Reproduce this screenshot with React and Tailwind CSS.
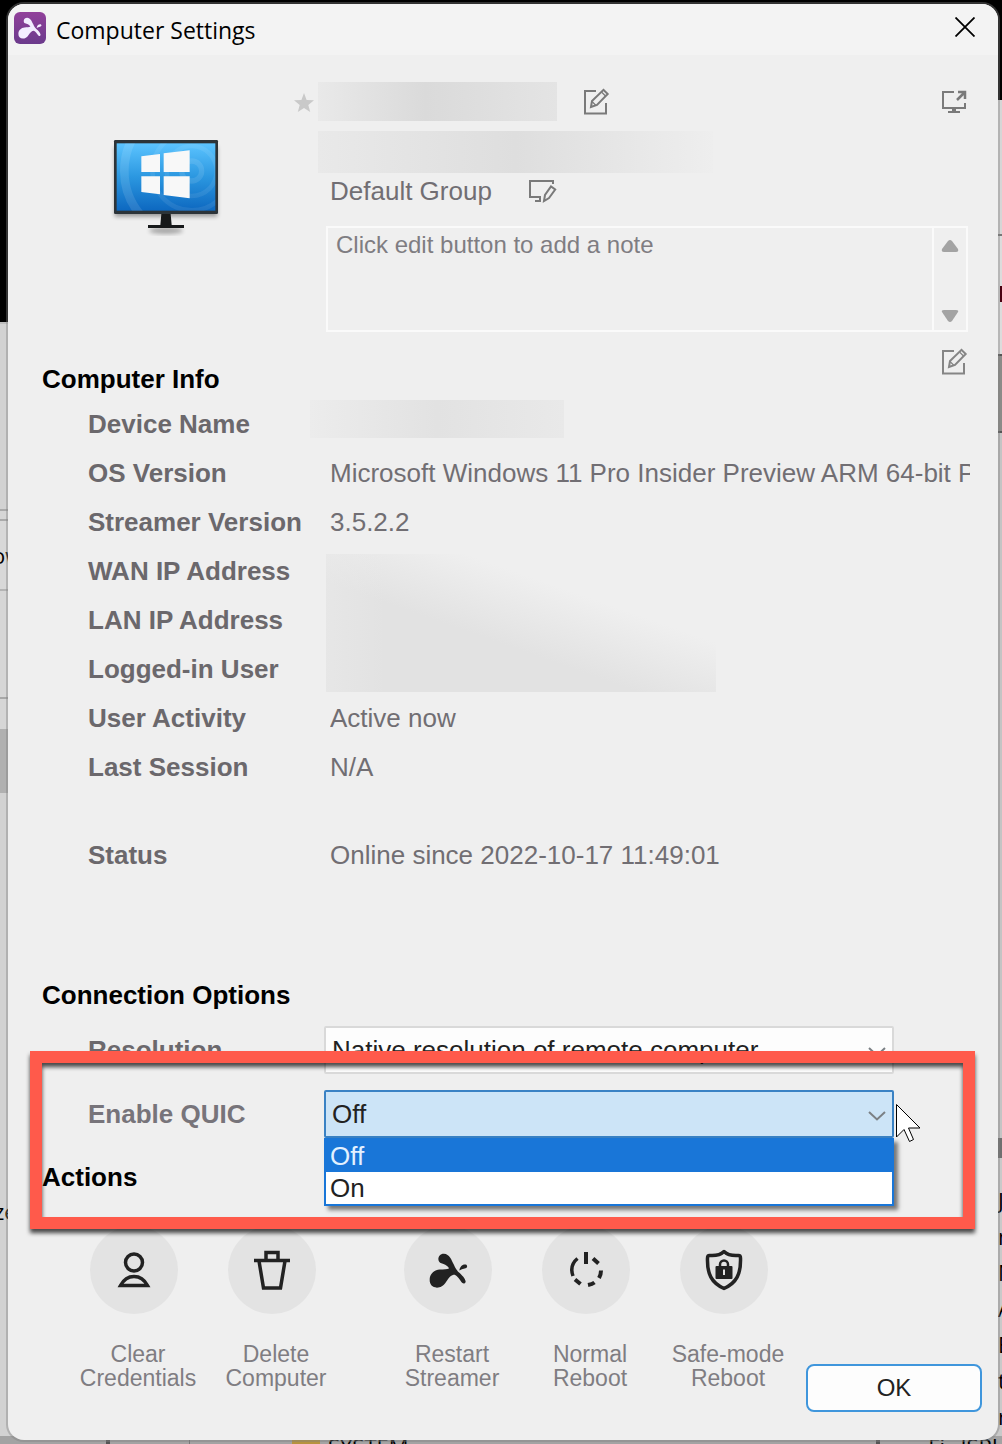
import React, { useState } from 'react';

// ─── Icons ────────────────────────────────────────────────────────────────────
const SplashIcon = ({ className }) => (
  <svg viewBox="388 754 118 106" className={className} fill="currentColor" aria-hidden="true">
    <path d="M390 836C390 816 404 806 420 804C433 803 443 804 449 800C443 790 432 787 423 784C412 779 414 756 433 756C450 757 456 774 463 789C467 799 472 807 478 812C488 820 498 832 499 840C498 848 490 848 486 842C480 832 474 824 466 820C455 820 449 828 440 841C432 854 422 859 412 859C398 858 390 850 390 836Z" />
    <path d="M480 807C481 796 489 787 500 789C506 793 504 800 496 801C490 802 485 804 480 807Z" />
  </svg>
);

const EditIcon = () => (
  <svg viewBox="0 0 27 27" className="size-[27px]" fill="none" stroke="currentColor" strokeWidth="2" aria-hidden="true">
    <path d="M13 3H2v22.500h21V15" />
    <path d="M8 19l1-6L20.500 1.800l4.200 4.200L14 17z" />
    <path d="M9 13.500l4 4M18.500 4l4 4" strokeWidth="1.200" />
  </svg>
);

const GroupEditIcon = () => (
  <svg viewBox="0 0 29 24" className="h-6 w-[29px]" fill="none" stroke="currentColor" strokeWidth="2" aria-hidden="true">
    <path d="M25 5V2H2v16h10v4M7 22h6" />
    <path d="M16 22l1-6 6-8.500 4.200 3L21 19z" />
  </svg>
);

const OpenIcon = () => (
  <svg viewBox="0 0 26 25" className="h-[25px] w-[26px]" fill="none" stroke="currentColor" strokeWidth="2" aria-hidden="true">
    <path d="M13 3H2v16h22v-5M7 23h12" />
    <path d="M13 19v4" strokeWidth="4" />
    <path d="M16 11l8-8M17 3h7v7" strokeWidth="2.500" />
  </svg>
);

const MonitorIcon = () => (
  <svg viewBox="330 414 336 300" className="h-[100px] w-28" aria-hidden="true">
    <defs>
      <linearGradient id="screen" x1="0" y1="0" x2="0" y2="1">
        <stop offset="0" stopColor="#5cc4ff" />
        <stop offset="0.500" stopColor="#2b97e0" />
        <stop offset="1" stopColor="#0d68c0" />
      </linearGradient>
      <filter id="soft" x="-10%" y="-10%" width="120%" height="130%">
        <feGaussianBlur stdDeviation="6" />
      </filter>
      <clipPath id="glass">
        <rect x="350" y="430" width="296" height="202" />
      </clipPath>
    </defs>
    <rect x="344" y="440" width="308" height="210" fill="#000" opacity="0.350" filter="url(#soft)" />
    <ellipse cx="498" cy="692" rx="50" ry="10" fill="#000" opacity="0.300" filter="url(#soft)" />
    <rect x="342" y="420" width="312" height="222" rx="4" fill="#2c3439" />
    <rect x="350" y="430" width="296" height="202" fill="url(#screen)" />
    <g clipPath="url(#glass)" fill="none" stroke="#fff">
      <circle cx="575" cy="513" r="30" strokeWidth="16" opacity="0.100" />
      <circle cx="575" cy="513" r="75" strokeWidth="14" opacity="0.080" />
      <circle cx="575" cy="513" r="118" strokeWidth="14" opacity="0.080" />
      <circle cx="575" cy="513" r="202" strokeWidth="26" opacity="0.110" />
    </g>
    <path fill="#f8f8f8" d="M424 469l56-7v54h-56zM491 460l78-9v65h-78zM424 529h56v54l-56-7zM491 529h78v66l-78-10z" />
    <path fill="#17191a" d="M484 642h28l3 33h37v9H444v-9h37z" />
  </svg>
);

const UserIcon = () => (
  <svg viewBox="0 0 34 36" className="h-9 w-[34px]" fill="none" stroke="currentColor" strokeWidth="3.500" aria-hidden="true">
    <circle cx="17" cy="10.500" r="8.500" />
    <path d="M3.500 33.500C7 27 11 24.500 17 24.500s10 2.500 13.500 9z" />
  </svg>
);

const TrashIcon = () => (
  <svg viewBox="0 0 36 42" className="h-[42px] w-9" fill="none" stroke="currentColor" strokeWidth="3.500" aria-hidden="true">
    <path d="M0 11.500h36M12 10V3.500h12V10M5 12l4.500 27h17L31 12" />
  </svg>
);

const RebootIcon = () => (
  <svg viewBox="0 0 36 38" className="h-[38px] w-9" fill="none" stroke="currentColor" strokeWidth="4" aria-hidden="true">
    <path d="M18 1v12" />
    <path d="M9.500 7.500C4 12 2.500 18 5 25" strokeWidth="3.500" />
    <path d="M25 7.500l5.500 5M33 19.500c0 3-.5 5-2 7.500M26.500 31.500c-2 1.500-4 2-6.500 2.500M12.500 33L7 28.500" />
  </svg>
);

const ShieldIcon = () => (
  <svg viewBox="0 0 38 42" className="h-[42px] w-[38px]" fill="none" stroke="currentColor" aria-hidden="true">
    <path strokeWidth="3.500" strokeLinejoin="round" d="M19 2.500c-3 3-8 4.500-14.500 4-1 0-2 1-2 2.500-.5 16 4 25 16.500 30.500C31.500 34 36 25 35.500 9c0-1.500-1-2.500-2-2.500C27 7 22 5.500 19 2.500z" />
    <path strokeWidth="2.500" d="M15 18v-2.500a4 4 0 018 0V18" />
    <rect x="10.500" y="17" width="17" height="13" rx="1" fill="currentColor" stroke="none" />
    <path stroke="#e3e3e3" strokeWidth="2" d="M19 20.500v5.500" />
  </svg>
);

const Chevron = () => (
  <svg
    viewBox="0 0 18 10"
    className="pointer-events-none absolute top-[21px] right-2 h-2.5 w-[18px]"
    fill="none"
    stroke="#7b8085"
    strokeWidth="2"
    aria-hidden="true"
  >
    <path d="M1 1l8 7.500L17 1" />
  </svg>
);

// ─── Data ─────────────────────────────────────────────────────────────────────
const ACTIVITY = [
  { label: 'User Activity', value: 'Active now' },
  { label: 'Last Session', value: 'N/A' },
];

const ACTIONS = [
  { lines: ['Clear', 'Credentials'], icon: <UserIcon /> },
  { lines: ['Delete', 'Computer'], icon: <TrashIcon /> },
  { lines: ['Restart', 'Streamer'], icon: <SplashIcon className="h-[35px] w-[39px]" />, gap: true },
  { lines: ['Normal', 'Reboot'], icon: <RebootIcon /> },
  { lines: ['Safe-mode', 'Reboot'], icon: <ShieldIcon /> },
];

// ─── Desktop that shows round the edges of the dialog ─────────────────────────
const Backdrop = () => (
  <div
    className="absolute inset-0 flex flex-col overflow-hidden bg-[#c9c9c9] font-['Open_Sans',sans-serif] text-[22px] text-black"
    aria-hidden="true"
  >
    <div className="h-6 shrink-0 bg-black" />
    <div className="flex flex-1 justify-between">
      <div className="flex w-6 flex-col leading-6">
        <div className="h-[298px] bg-black" />
        <div className="h-[187px] border-t-2 border-[#bdbdbd] bg-[#d2d2d2]" />
        <div className="h-3 border-y-2 border-[#aaaaaa] bg-[#d6d6d6]" />
        <div className="h-[68px] bg-[#d8d8d8] pt-[22px]">
          <span className="-ml-2">ow</span>
        </div>
        <div className="h-[108px] border-t-2 border-[#b4b4b4] bg-[#d6d6d6]" />
        <div className="h-8 border-t-2 border-[#a8a8a8] bg-[#d6d6d6]" />
        <div className="h-16 bg-[#b0b0b0]" />
        <div className="flex-1 bg-[#d2d2d2] pt-[406px]">
          <span className="-ml-1.5">ze</span>
        </div>
      </div>
      <div className="flex w-1 flex-col leading-9">
        <div className="-ml-6 h-[76px] bg-black" />
        <div className="h-[134px] bg-[#d6d6d6]" />
        <div className="h-[120px] border-t-2 border-[#777777] bg-[#dcdcdc] pt-[50px]">
          <div className="ml-auto h-4 w-0.5 bg-[#4a0010]" />
        </div>
        <div className="h-[79px] border-y-2 border-[#555555] bg-[#8b8b88]" />
        <div className="h-[705px] bg-[#c4c4c4]" />
        <div className="h-5 bg-[#6f6f6f]" />
        <div className="mt-6 h-9">J</div>
        <div className="h-9">n</div>
        <div className="h-9">M</div>
        <div className="h-9">A</div>
        <div className="h-9">E</div>
        <div className="h-9">t</div>
        <div className="h-9">r</div>
      </div>
    </div>
    <div className="flex h-2 shrink-0 items-start overflow-hidden bg-[#a3a3a3] pl-[106px] leading-5">
      <span className="h-2 w-1 bg-[#555555]" />
      <span className="h-2 w-20 border-r border-[#777777]" />
      <span className="ml-[102px] h-2 w-7 bg-[#b6933f]" />
      <span className="ml-2">SYSTEM</span>
      <span className="ml-auto h-2 w-1 bg-[#555555]" />
      <span className="pr-1 pl-12">Fi_ ISPI</span>
    </div>
  </div>
);

const SectionTitle = ({ children, className = '' }) => (
  <h2 className={`text-[26px] leading-8 font-bold text-black ${className}`}>{children}</h2>
);

const Info = ({ label, children }) => (
  <>
    <dt className="font-bold text-[#6b686c]">{label}</dt>
    <dd className="overflow-hidden whitespace-nowrap text-[#716e73]">{children}</dd>
  </>
);

function App() {
  const [resolution, setResolution] = useState('native');
  const [quic, setQuic] = useState('Off');

  return (
    <div className="relative flex min-h-screen pt-1 pr-1 pb-1 pl-2 font-['Liberation_Sans',Arial,sans-serif]">
      <Backdrop />

      <main
        role="dialog"
        aria-labelledby="dialog-title"
        className="relative min-w-0 flex-1 overflow-hidden rounded-2xl bg-[#efefef] shadow-[0_0_0_2px_rgba(128,128,128,0.4)]"
      >
        {/* Title bar */}
        <header className="flex h-[51px] items-center bg-[#f3f3f3] pr-[23px] pl-1.5">
          <span className="mb-1 flex size-8 items-center justify-center rounded-md bg-linear-to-b from-[#91409a] to-[#6b3a8c] text-[#f3edff]">
            <SplashIcon className="h-[22px] w-6" />
          </span>
          <h1 id="dialog-title" className="ml-2.5 font-['Open_Sans',sans-serif] text-[23px] leading-8 text-black">
            Computer Settings
          </h1>
          <button type="button" aria-label="Close" className="mb-1.5 ml-auto text-black">
            <svg viewBox="0 0 20 20" className="size-5" stroke="currentColor" strokeWidth="1.800">
              <path d="M.5.5l19 19M19.500.5l-19 19" />
            </svg>
          </button>
        </header>

        {/* Computer summary */}
        <section className="flex pt-[27px] pr-[30px] text-[#7a7a7a]">
          <div className="w-[286px] shrink-0 pt-14 pl-[102px]">
            <MonitorIcon />
          </div>
          <svg viewBox="0 0 20 20" className="mt-[11px] mr-1 size-5 shrink-0 fill-[#c9c9c9]" aria-hidden="true">
            <path d="M10 0l2.600 6.900 7.400.4-5.700 4.600 1.900 7.100L10 15l-6.200 4 1.900-7.100L0 7.300l7.400-.4z" />
          </svg>
          <div className="min-w-0 flex-1">
            <div className="flex items-center">
              <div className="h-[39px] w-[239px] bg-linear-to-r from-[#e9e9e9] via-[#dadada] via-45% to-[#e4e4e4]" />
              <button type="button" aria-label="Edit name" className="ml-[26px]">
                <EditIcon />
              </button>
              <button type="button" aria-label="Open in new window" className="mr-px ml-auto">
                <OpenIcon />
              </button>
            </div>
            <div className="mt-2.5 h-[42px] w-[395px] bg-linear-to-r from-[#e9e9e9] via-[#dedede] via-50% to-[#eeeeee]" />
            <div className="flex h-9 items-center gap-9 pl-3">
              <span className="text-[26px] leading-9 text-[#716e73]">Default Group</span>
              <button type="button" aria-label="Change group">
                <GroupEditIcon />
              </button>
            </div>
            <div className="mt-[17px] ml-2 flex h-[106px] border-2 border-[#fafafa]">
              <textarea
                readOnly
                aria-label="Note"
                placeholder="Click edit button to add a note"
                className="min-w-0 flex-1 resize-none overflow-hidden px-2 pt-px text-[24px] leading-8 outline-none placeholder:text-[#7f7d82]"
              />
              <div className="flex w-[34px] flex-col items-center justify-between border-l-2 border-[#fafafa] pt-2.5 pb-1.5 text-[#a3a3a3]">
                <button type="button" aria-label="Scroll up">
                  <svg viewBox="0 0 18 16" className="h-4 w-[18px]" fill="currentColor">
                    <path d="M7 3q2-2 4 0l6 8q1 3-2 3H3q-3 0-2-3z" />
                  </svg>
                </button>
                <button type="button" aria-label="Scroll down">
                  <svg viewBox="0 0 18 16" className="h-4 w-[18px]" fill="currentColor">
                    <path d="M7 13q2 2 4 0l6-9q1-2-2-2H3Q0 2 1 4z" />
                  </svg>
                </button>
              </div>
            </div>
          </div>
        </section>

        {/* Computer info */}
        <section>
          <div className="flex h-[68px] items-start justify-between pt-4 pr-[30px] pl-[34px]">
            <SectionTitle className="mt-[15px]">Computer Info</SectionTitle>
            <button type="button" aria-label="Edit note" className="text-[#858585]">
              <EditIcon />
            </button>
          </div>
          <dl className="grid auto-rows-[49px] grid-cols-[242px_minmax(0,1fr)] pr-7 pl-20 text-[26px] leading-[49px]">
            <dt className="font-bold text-[#6b686c]">Device Name</dt>
            <dd className="-ml-5 flex">
              <div className="h-[38px] w-[254px] bg-linear-to-r from-[#ececec] via-[#e2e2e2] to-[#e9e9e9]" />
            </dd>
            <Info label="OS Version">Microsoft Windows 11 Pro Insider Preview ARM 64-bit P</Info>
            <Info label="Streamer Version">3.5.2.2</Info>
            <dt className="font-bold text-[#6b686c]">WAN IP Address</dt>
            <dd className="row-span-3 -ml-1 pt-[7px]">
              <div className="h-[138px] w-[390px] bg-[linear-gradient(to_right,#ebebeb80,transparent_15%),linear-gradient(to_top_right,#e2e2e2_0%,#e2e2e2_40%,#efefef_68%)]" />
            </dd>
            <dt className="font-bold text-[#6b686c]">LAN IP Address</dt>
            <dt className="font-bold text-[#6b686c]">Logged-in User</dt>
            {ACTIVITY.map((row) => (
              <Info key={row.label} label={row.label}>
                {row.value}
              </Info>
            ))}
          </dl>
          <dl className="mt-[39px] grid auto-rows-[49px] grid-cols-[242px_minmax(0,1fr)] pr-7 pl-20 text-[26px] leading-[49px]">
            <Info label="Status">Online since 2022-10-17 11:49:01</Info>
          </dl>
        </section>

        {/* Connection options */}
        <section className="relative mt-[99px]">
          <SectionTitle className="pl-[34px]">Connection Options</SectionTitle>
          <div className="mt-[15px] flex items-center pr-[104px] pl-20 text-[26px]">
            <label htmlFor="resolution" className="w-[236px] shrink-0 font-bold text-[#6b686c]">
              Resolution
            </label>
            <div className="relative min-w-0 flex-1">
              <select
                id="resolution"
                value={resolution}
                onChange={(e) => setResolution(e.target.value)}
                className="h-12 w-full appearance-none rounded-xs border-2 border-[#d9d9d9] bg-[#fdfdfd] pr-8 pl-1.5 text-[#222222]"
              >
                <option value="native">Native resolution of remote computer</option>
              </select>
              <Chevron />
            </div>
          </div>
          <div className="mt-4 flex items-center pr-[104px] pl-20 text-[26px]">
            <label htmlFor="quic" className="w-[236px] shrink-0 font-bold text-[#77747a]">
              Enable QUIC
            </label>
            <div className="relative min-w-0 flex-1">
              <select
                id="quic"
                value={quic}
                onChange={(e) => setQuic(e.target.value)}
                className="h-12 w-full appearance-none rounded-xs border-2 border-[#3a82c4] bg-[#cce4f7] pr-8 pl-1.5 text-[#222222]"
              >
                <option>Off</option>
                <option>On</option>
              </select>
              <Chevron />
              <ul
                role="listbox"
                aria-label="Enable QUIC"
                className="absolute inset-x-0 top-full border-2 border-[#1976d8] bg-white leading-8 text-[#222222] shadow-[4px_4px_4px_rgba(0,0,0,0.5)]"
              >
                {['Off', 'On'].map((option) => (
                  <li
                    key={option}
                    role="option"
                    aria-selected={quic === option}
                    onClick={() => setQuic(option)}
                    className="h-8 pl-1 aria-selected:bg-[#1976d8] aria-selected:text-[#e3f1ff]"
                  >
                    {option}
                  </li>
                ))}
              </ul>
              <svg viewBox="0 0 26 40" className="absolute top-[13px] left-full ml-px h-10 w-[26px]" aria-hidden="true">
                <path d="M1.500 1.500v32.500l7.500-7.500 5.500 12 4-2-5-11.500H25z" fill="#fff" stroke="#000" />
              </svg>
            </div>
          </div>
          <SectionTitle className="mt-[23px] pl-[34px]">Actions</SectionTitle>
          {/* Callout round the QUIC option */}
          <div className="pointer-events-none absolute top-[72px] right-[23px] left-[22px] z-10 h-[178px] border-12 border-[#ff5a4b] drop-shadow-[0_4px_2px_rgba(0,0,0,0.7)]" />
        </section>

        {/* Actions */}
        <section className="flex items-start justify-between pt-[33px] pr-4 pb-7 pl-[57px]">
          <div className="flex">
            {ACTIONS.map(({ lines, icon, gap }) => (
              <button
                key={lines.join(' ')}
                type="button"
                className={`flex w-[138px] shrink-0 flex-col items-center ${gap ? 'ml-[38px]' : ''}`}
              >
                <span className="flex size-[88px] items-center justify-center rounded-full bg-[#e3e3e3] text-[#222222]">
                  {icon}
                </span>
                <span className="mt-7 pl-2 text-[23px] leading-6 text-[#7f7d82]">
                  {lines[0]}
                  <br />
                  {lines[1]}
                </span>
              </button>
            ))}
          </div>
          <button
            type="button"
            className="-ml-6 mt-[138px] h-12 w-44 shrink-0 rounded-lg border-2 border-[#3f96dc] bg-[#fdfdfd] text-[24px] text-[#222222]"
          >
            OK
          </button>
        </section>
      </main>
    </div>
  );
}

export default App;
